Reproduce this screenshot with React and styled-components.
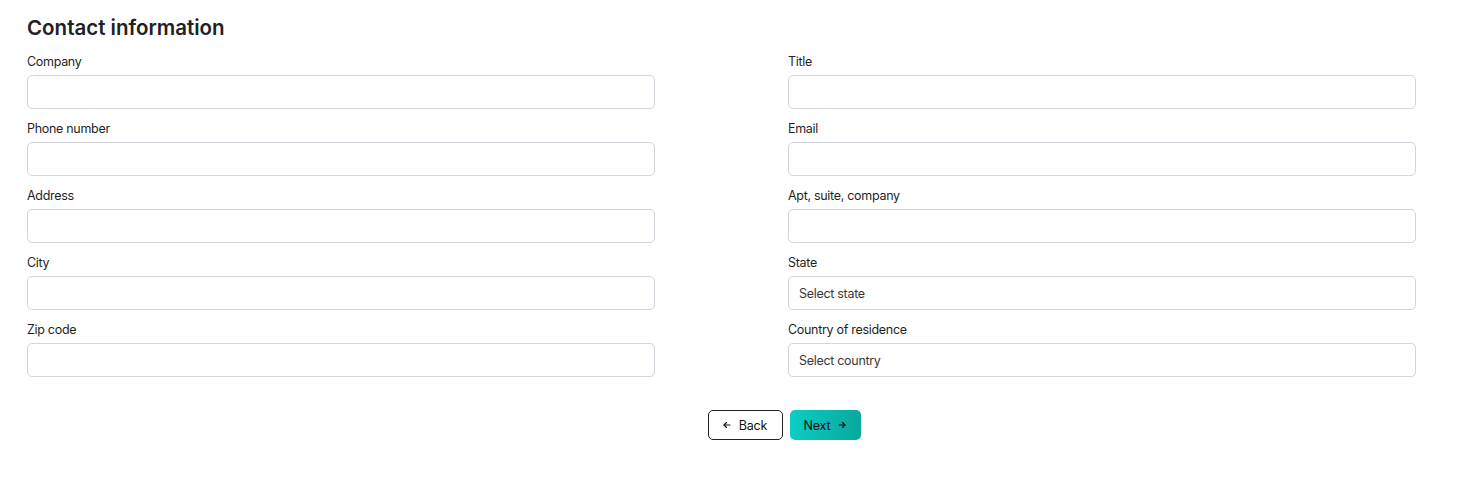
import React from "react";
import styled, { createGlobalStyle } from "styled-components";

const Global = createGlobalStyle`
  html, body { margin: 0; padding: 0; background: #ffffff; }
  body { font-family: Inter, "Noto Sans", sans-serif; color: #1f1f1f; }
  * { box-sizing: border-box; }
`;

const Page = styled.div`
  padding: 15px 27px 0 27px;
`;

const Title = styled.h2`
  margin: 0 0 13px 0;
  font-size: 20.5px;
  font-weight: 600;
  line-height: 26px;
  color: #202124;
  letter-spacing: 0px;
`;

const Grid = styled.div`
  display: grid;
  grid-template-columns: 628px 628px;
  column-gap: 133px;
  row-gap: 12px;
`;

const Field = styled.div`
  display: flex;
  flex-direction: column;
  gap: 5px;
`;

const Label = styled.label`
  font-size: 12.5px;
  line-height: 16px;
  color: #1f1f1f;
  letter-spacing: -0.3px;
`;

const Input = styled.div`
  height: 34px;
  border: 1px solid #d3d4dc;
  border-radius: 5px;
  background: #fff;
  display: flex;
  align-items: center;
  padding: 0 10px;
  font-size: 12.5px;
  letter-spacing: -0.3px;
  color: #3a3a3a;
`;

const Actions = styled.div`
  display: flex;
  justify-content: center;
  gap: 7px;
  margin-top: 33px;
  padding-left: 98px;
`;

const Button = styled.button`
  height: 30px;
  display: inline-flex;
  align-items: center;
  justify-content: center;
  gap: 8px;
  border-radius: 5px;
  font-family: Inter, "Noto Sans", sans-serif;
  font-size: 12.5px;
  letter-spacing: -0.2px;
  color: #111;
  cursor: pointer;
  padding: 0;
  width: ${(p) => p.$w}px;
  border: ${(p) => (p.$primary ? "none" : "1px solid #222")};
  background: ${(p) =>
    p.$primary ? "linear-gradient(90deg, #0ccdc4 0%, #08a89e 100%)" : "#fff"};
`;

const Arrow = ({ left }) => (
  <svg width="8" height="8" viewBox="0 0 8 8" fill="none" stroke="#111" strokeWidth="1.1" strokeLinecap="round" strokeLinejoin="round">
    {left ? (
      <>
        <path d="M7 4H1" />
        <path d="M3.5 1.5L1 4l2.5 2.5" />
      </>
    ) : (
      <>
        <path d="M1 4h6" />
        <path d="M4.5 1.5L7 4 4.5 6.5" />
      </>
    )}
  </svg>
);

const fields = [
  ["Company", ""],
  ["Title", ""],
  ["Phone number", ""],
  ["Email", ""],
  ["Address", ""],
  ["Apt, suite, company", ""],
  ["City", ""],
  ["State", "Select state"],
  ["Zip code", ""],
  ["Country of residence", "Select country"],
];

export default function App() {
  return (
    <>
      <Global />
      <Page>
        <Title>Contact information</Title>
        <Grid>
          {fields.map(([label, ph]) => (
            <Field key={label}>
              <Label>{label}</Label>
              <Input>{ph}</Input>
            </Field>
          ))}
        </Grid>
        <Actions>
          <Button $w={75}>
            <Arrow left />
            Back
          </Button>
          <Button $primary $w={71}>
            Next
            <Arrow />
          </Button>
        </Actions>
      </Page>
    </>
  );
}
